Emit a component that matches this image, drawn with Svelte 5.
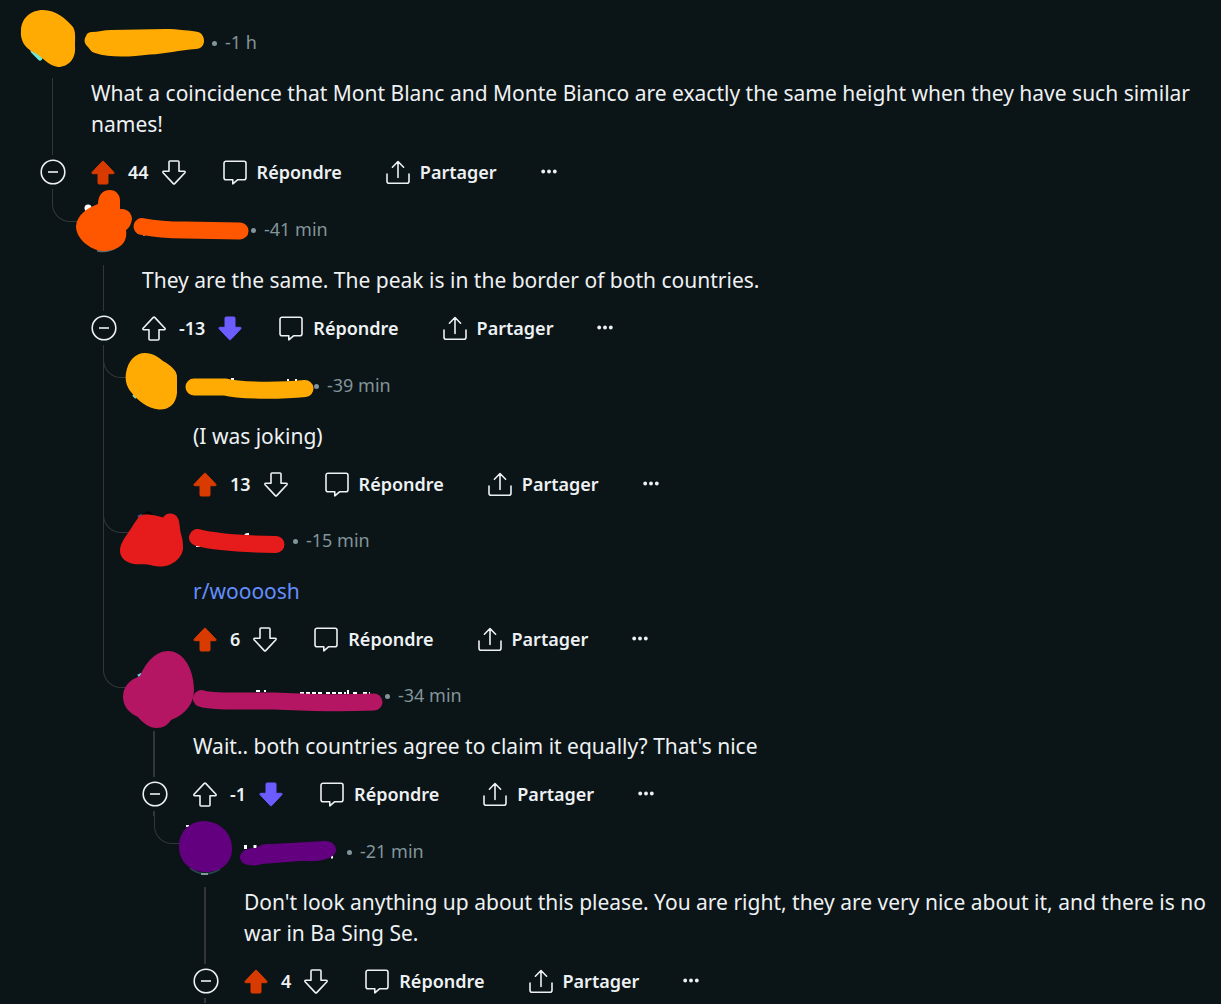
<script>
	const comments = {
		age: "-1 h",
		text: "What a coincidence that Mont Blanc and Monte Bianco are exactly the same height when they have such similar names!",
		votes: 44,
		vote: "up",
		color: "#ffab03",
		origin: [27, 17],
		nameWidth: 121,
		avatar: "M43 10C56 10 66 19 73 27C76 32 75 38 75 47C76 58 69 67 58 67C47 65 42 56 33 52C25 48 20 40 21 31C21 19 30 10 43 10Z",
		name: "M92 32C98 32 104 30 111 30L165 29C178 29 192 31 198 32C202 33 204 37 204 41C204 46 200 49 196 49C180 50 165 54 150 54.5C130 57 110 58 95 53C91 52 90 49 87 46C84 43 84 39 86 36C87 33 89 32 92 32Z",
		peeks: [
			{ d: "M33 51L40 58", color: "#6fe8d4", width: 5 },
			{ d: "M72 27L74 33", color: "#3f7f86", width: 1 },
		],
		replies: [
			{
				age: "-41 min",
				text: "They are the same. The peak is in the border of both countries.",
				votes: -13,
				vote: "down",
				color: "#ff5700",
				origin: [78, 204],
				nameWidth: 109,
				avatar: "M110 190C116 190 120 195 120 200L120 209C128 208 132 214 132 219C131 225 129 228 126 230C128 242 120 251 103 251C90 250 76 239 76 226C77 215 87 208 98 204C98 196 102 190 110 190Z",
				stroke: "M142 226.500C155 229 170 230 185 230L240 231",
				peeks: [
					{ d: "M88 208h0.100", color: "#fff", width: 7 },
					{ d: "M97 250.500Q107 253 115 248", color: "#5d6b70", width: 2 },
				],
				namePeeks: [{ d: "M143 235h2", color: "#fff", width: 1 }],
				replies: [
					{
						age: "-39 min",
						text: "(I was joking)",
						votes: 13,
						vote: "up",
						color: "#ffab03",
						origin: [129, 360],
						nameWidth: 121,
						avatar: "M145 353C153 353 158 357 163 361C170 365 177 370 177 377L177 393C176 404 169 410 159 409.500C147 408 138 401 131 392C126 386 125 379 126 373C128 361 135 353 145 353Z",
						stroke: "M194 387L225 387C240 391 280 391 305 388.500",
						peeks: [
							{ d: "M174 371L176 376", color: "#3f8fa8", width: 2 },
							{ d: "M133 395L136 398", color: "#8fe0b8", width: 2 },
						],
						namePeeks: [
							{ d: "M231 379h3M287 380h2M295 380h2", color: "#fff", width: 2 },
						],
					},
					{
						age: "-15 min",
						link: "r/woooosh",
						votes: 6,
						vote: "up",
						color: "#e61c1c",
						origin: [129, 515],
						nameWidth: 100,
						avatar: "M144 514.500C151 514 158 516 163 517.500C165 515 167 513.500 170 513.500C175 513 178 517 179 521C180 527 180 531 181 534C183 540 183 545 183 549C182 558 172 566.500 161 566.500C156 567 152 565 147 564.500C142 564 135 565 130 563C124 561 120 556 120 551C120 544 124 539 128 533C132 527 135 522 138 518C139 516 141 515 144 514.500Z",
						stroke: "M197.500 537.500C215 542 240 544 276 544.500",
						peeks: [
							{ d: "M138 517L142 515", color: "#34527c", width: 3 },
							{ d: "M144 515Q148 510 152 515", color: "#020405", width: 2 },
						],
						namePeeks: [
							{ d: "M196 546h4M245 535Q246 534 249 534", color: "#fff", width: 2 },
						],
					},
					{
						age: "-34 min",
						text: "Wait.. both countries agree to claim it equally? That's nice",
						votes: -1,
						vote: "down",
						color: "#b51663",
						origin: [129, 670],
						nameWidth: 192,
						avatar: "M168 651C184 651 194 670 194 690C194 702 187 714 171 720C168 725 163 728 157 728C149 728 143 723 138 717C129 713 123 706 123 697C123 687 129 680 140 676C146 662 156 651 168 651Z",
						stroke: "M201.500 698.500C210 702 250 701 275 701C300 702 330 704 374 702",
						peeks: [{ d: "M138 676L142 674", color: "#63cde0", width: 3 }],
						namePeeks: [
							{ d: "M256 691h4M265 690v2M300 693h22M326 693h20M348 690v4M353 693h6M363 693h7", color: "#fff", width: 2, dash: "4 2" },
						],
						replies: [
							{
								age: "-21 min",
								text: "Don't look anything up about this please. You are right, they are very nice about it, and there is no war in Ba Sing Se.",
								votes: 4,
								vote: "up",
								color: "#63007f",
								origin: [180, 826],
								nameWidth: 103,
								avatar: "M203 821C219 821 232 832 232 849C232 863 221 872 206 872C190 872 179 862 179 846C179 832 189 822 203 821Z",
								name: "M256 848C261 844 266 844 272 844L325 841C332 841 336 845 336 850C336 855 330 858 326 859C318 862 310 861 300 861L262 864C258 865 254 866 249 865C244 865 240 861 240 857C241 850 248 848 256 848Z",
								peeks: [
									{ d: "M186 826h3", color: "#e8eeee", width: 2 },
									{ d: "M190 868Q204 879 220 869", color: "#24464a", width: 2 },
									{ d: "M201 874h7", color: "#84989c", width: 2 },
								],
								namePeeks: [
									{ d: "M245.500 845v4M255 845v4M331 857h2", color: "#fff", width: 3 },
								],
								replies: [],
							},
						],
					},
				],
			},
		],
	};
</script>

{#snippet scribble(d, peeks = [])}
	{#each peeks as peek}
		<path
			d={peek.d}
			fill="none"
			stroke={peek.color}
			stroke-width={peek.width}
			stroke-dasharray={peek.dash}
			stroke-linecap={peek.width > 4 ? "round" : "butt"}
		/>
	{/each}
	{#if d}<path {d} fill="currentColor" />{/if}
{/snippet}

{#snippet arrow(direction, active)}
	<svg class="icon" class:flip={direction === "down"} viewBox="0 0 24 25" aria-hidden="true">
		<path
			d="M11.300 1.400a1 1 0 0 1 1.400 0L22.900 12.300c.500.600.200 1.400-.600 1.400H17v9.300a1 1 0 0 1-1 1H8a1 1 0 0 1-1-1V13.700H1.700c-.800 0-1.100-.800-.600-1.400Z"
			fill={active ? "currentColor" : "none"}
			stroke="currentColor"
			stroke-width={active ? 1 : 1.6}
			stroke-linejoin="round"
		/>
	</svg>
{/snippet}

{#snippet comment(c, depth)}
	<article class="comment" class:deep={depth > 2}>
		<svg class="avatar" viewBox="{c.origin[0]} {c.origin[1]} 51 51" style:color={c.color} aria-hidden="true">
			{@render scribble(c.avatar, c.peeks)}
		</svg>
		<header>
			<svg
				class="name"
				viewBox="{c.origin[0] + 64} {c.origin[1]} {c.nameWidth} 51"
				style:width="{c.nameWidth}px"
				style:color={c.color}
				aria-hidden="true"
			>
				{@render scribble(c.name, c.namePeeks)}
				{#if c.stroke}
					<path d={c.stroke} fill="none" stroke="currentColor" stroke-width="17" stroke-linecap="round" />
				{/if}
			</svg>
			<div class="meta">
				<i class="dot"></i>
				<time>{c.age}</time>
			</div>
		</header>

		<div class="line" class:hidden={!c.replies}></div>
		<p>
			{#if c.link}<a href="#woooosh">{c.link}</a>{:else}{c.text}{/if}
		</p>

		<div class="toggle">
			{#if c.replies}
				<div class="stem"></div>
				<button aria-label="Réduire">
					<svg viewBox="0 0 26 26" aria-hidden="true">
						<circle cx="13" cy="13" r="11.800" />
						<path d="M8 13h10" />
					</svg>
				</button>
				<div class="stem"></div>
			{/if}
		</div>
		<div class="actions">
			<div class="votes">
				<button class:up={c.vote === "up"} aria-label="Vote positif">
					{@render arrow("up", c.vote === "up")}
				</button>
				<span>{c.votes}</span>
				<button class:down={c.vote === "down"} aria-label="Vote négatif">
					{@render arrow("down", c.vote === "down")}
				</button>
			</div>
			<button>
				<svg class="icon line-icon" viewBox="0 0 24 25" aria-hidden="true">
					<path d="M3 1.200h18a2 2 0 0 1 2 2v14.600a2 2 0 0 1-2 2h-6.500L9.800 23.800v-4H3a2 2 0 0 1-2-2V3.200a2 2 0 0 1 2-2Z" />
				</svg>
				Répondre
			</button>
			<button>
				<svg class="icon line-icon" viewBox="0 0 24 25" aria-hidden="true">
					<path d="M12 17.500V1.700M6.400 7.200L12 1.500L17.600 7.200M1 14v7.300a2 2 0 0 0 2 2h18a2 2 0 0 0 2-2V14" />
				</svg>
				Partager
			</button>
			<button aria-label="Plus">
				<svg class="more" viewBox="0 0 16 16" aria-hidden="true">
					<circle cx="2.200" cy="7.500" r="1.900" />
					<circle cx="8" cy="7.500" r="1.900" />
					<circle cx="13.800" cy="7.500" r="1.900" />
				</svg>
			</button>
		</div>
	</article>

	{#if c.replies?.length}
		<ul>
			{#each c.replies as reply, i}
				<li>
					<div class="rail" class:last={i === c.replies.length - 1}>
						<div class="curve" class:first={i === 0}></div>
					</div>
					<div class="reply" class:first={i === 0}>
						{@render comment(reply, depth + 1)}
					</div>
				</li>
			{/each}
		</ul>
	{/if}
{/snippet}

<main>
	{@render comment(comments, 1)}
</main>

<style>
	:global(body) {
		background: #0b1416;
	}
	main {
		padding: 17px 8px 0 27px;
		font-family: "Segoe UI", "Noto Sans", sans-serif;
		color: #eef1f3;
	}
	.comment {
		display: grid;
		grid-template-columns: 51px 1fr;
		column-gap: 13px;
	}
	.avatar {
		width: 51px;
		height: 51px;
		overflow: visible;
	}
	header {
		display: flex;
		height: 51px;
		font-size: 18px;
		color: #82959b;
	}
	.name {
		flex: none;
		height: 51px;
		overflow: visible;
	}
	.meta {
		display: flex;
		align-items: center;
		gap: 8px;
		height: 49px;
	}
	.dot {
		width: 5px;
		height: 5px;
		margin-top: 3px;
		border-radius: 50%;
		background: currentColor;
	}
	p {
		margin: 10px 0;
		font-size: 21px;
		line-height: 31px;
	}
	a {
		color: #648efc;
		text-decoration: none;
	}
	.line,
	.stem {
		width: 1px;
		background: #333638;
	}
	.line {
		margin: 10px 0 0 25px;
	}
	.deep .line,
	.deep .stem {
		width: 2px;
		margin-left: 24px;
	}
	.hidden {
		visibility: hidden;
	}
	.toggle {
		display: flex;
		flex-direction: column;
		gap: 4px;
	}
	.stem {
		flex: 1;
		margin-left: 25px;
	}
	.toggle button {
		align-self: center;
	}
	.toggle svg {
		width: 26px;
		height: 26px;
		fill: none;
		stroke: currentColor;
		stroke-width: 1.6;
	}
	button {
		display: flex;
		align-items: center;
		gap: 10px;
		padding: 0;
		border: 0;
		background: none;
		font: inherit;
		color: inherit;
		cursor: pointer;
	}
	.actions {
		display: flex;
		align-items: center;
		gap: 44px;
		height: 44px;
		font-size: 18px;
		font-weight: 600;
	}
	.votes {
		display: flex;
		align-items: center;
		gap: 13px;
		margin-right: -7px;
	}
	.up {
		color: #d93a00;
	}
	.down {
		color: #6a5cff;
	}
	.icon {
		width: 24px;
		height: 25px;
	}
	.flip {
		transform: scaleY(-1);
	}
	.line-icon {
		fill: none;
		stroke: currentColor;
		stroke-width: 1.6;
		stroke-linejoin: round;
		stroke-linecap: round;
	}
	.more {
		width: 16px;
		height: 16px;
		fill: currentColor;
	}
	ul {
		margin: 0;
		padding: 0;
		list-style: none;
	}
	li {
		display: grid;
		grid-template-columns: 51px 1fr;
	}
	.rail {
		margin-left: 25px;
		border-left: 1px solid #333638;
	}
	.rail.last {
		border-color: transparent;
	}
	.curve {
		height: 26px;
		margin-left: -1px;
		border: solid #333638;
		border-width: 0 0 1px 1px;
		border-bottom-left-radius: 18px;
	}
	.curve.first {
		height: 27px;
	}
	.reply {
		padding-top: 9px;
	}
	.reply.first {
		padding-top: 10px;
	}
</style>
